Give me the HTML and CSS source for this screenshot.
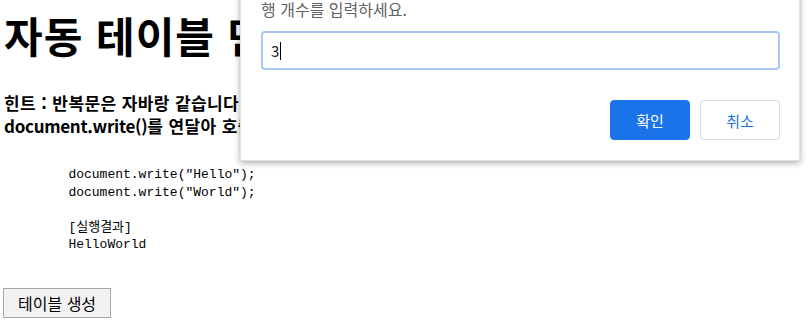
FILE: index.html
```html
<!DOCTYPE html>
<html lang="ko">
<head>
<meta charset="utf-8">
<title>자동 테이블 만들기</title>
<link rel="stylesheet" href="styles.css">
</head>
<body>
<h1 class="title">자동 테이블 만들기</h1>
<p class="hint">힌트 : 반복문은 자바랑 같습니다. for문을 사용하세요.<br><span class="hint-code">document.write()</span>를 연달아 호출하면 한 줄로 이어서 출력됩니다.</p>
<pre class="code">        document.write("Hello");
        document.write("World");

        [실행결과]
        HelloWorld</pre>
<button class="make-btn" type="button">테이블 생성</button>

<div class="dialog">
  <div class="dialog-msg">행 개수를 입력하세요.</div>
  <div class="dialog-input"><span class="val">3</span><span class="caret"></span></div>
  <div class="dialog-actions">
    <button class="btn btn-ok" type="button">확인</button>
    <button class="btn btn-cancel" type="button">취소</button>
  </div>
</div>
</body>
</html>
```
FILE: styles.css
```css
html, body {
  margin: 0;
  padding: 0;
  background: #fff;
}
body {
  padding: 0 4px;
  font-family: "Noto Sans CJK KR", "Noto Sans", sans-serif;
  color: #000;
  overflow: hidden;
}
.title {
  font-size: 42px;
  font-weight: 700;
  line-height: 50px;
  letter-spacing: 1px;
  margin: 10px 0 31px;
  white-space: nowrap;
}
.hint {
  font-size: 17px;
  font-weight: 700;
  line-height: 23px;
  letter-spacing: 0.4px;
  margin: 0;
  white-space: nowrap;
}
.hint-code {
  letter-spacing: -0.3px;
}
.code {
  font-family: "Liberation Mono", "Noto Sans CJK KR", monospace;
  font-size: 13px;
  line-height: 17.5px;
  margin: 29px 0 34px;
  padding-left: 2px;
}
.make-btn {
  font-family: "Noto Sans CJK KR", sans-serif;
  font-size: 16px;
  line-height: 20px;
  height: 30px;
  padding: 0 14px;
  margin-left: -1px;
  background: #f2f2f2;
  border: 1px solid #a8a8a8;
  border-radius: 0;
  color: #000;
}
.dialog {
  position: absolute;
  left: 240px;
  top: -30px;
  width: 560px;
  box-sizing: border-box;
  padding: 28px 19px 20px 20px;
  background: #fff;
  border: 1px solid #e2e2e2;
  box-shadow: 0 2px 6px rgba(0,0,0,0.35);
  border-radius: 0 0 2px 2px;
}
.dialog-msg {
  font-size: 16px;
  line-height: 20px;
  color: #5f6368;
  margin-bottom: 12px;
}
.dialog-input {
  height: 39px;
  box-sizing: border-box;
  border: 2px solid #a9c8f5;
  border-radius: 4px;
  display: flex;
  align-items: center;
  padding-left: 8px;
  font-size: 15px;
  color: #202124;
  margin-bottom: 30px;
}
.caret {
  display: inline-block;
  width: 1px;
  height: 18px;
  background: #000;
  margin-left: 1px;
}
.dialog-actions {
  display: flex;
  justify-content: flex-end;
  gap: 10px;
}
.btn {
  width: 80px;
  height: 40px;
  border-radius: 4px;
  font-family: "Noto Sans CJK KR", sans-serif;
  font-size: 15px;
  padding: 0;
}
.btn-ok {
  background: #1a73e8;
  border: 1px solid #1a73e8;
  color: #fff;
}
.btn-cancel {
  background: #fff;
  border: 1px solid #dadce0;
  color: #1a73e8;
}
```
